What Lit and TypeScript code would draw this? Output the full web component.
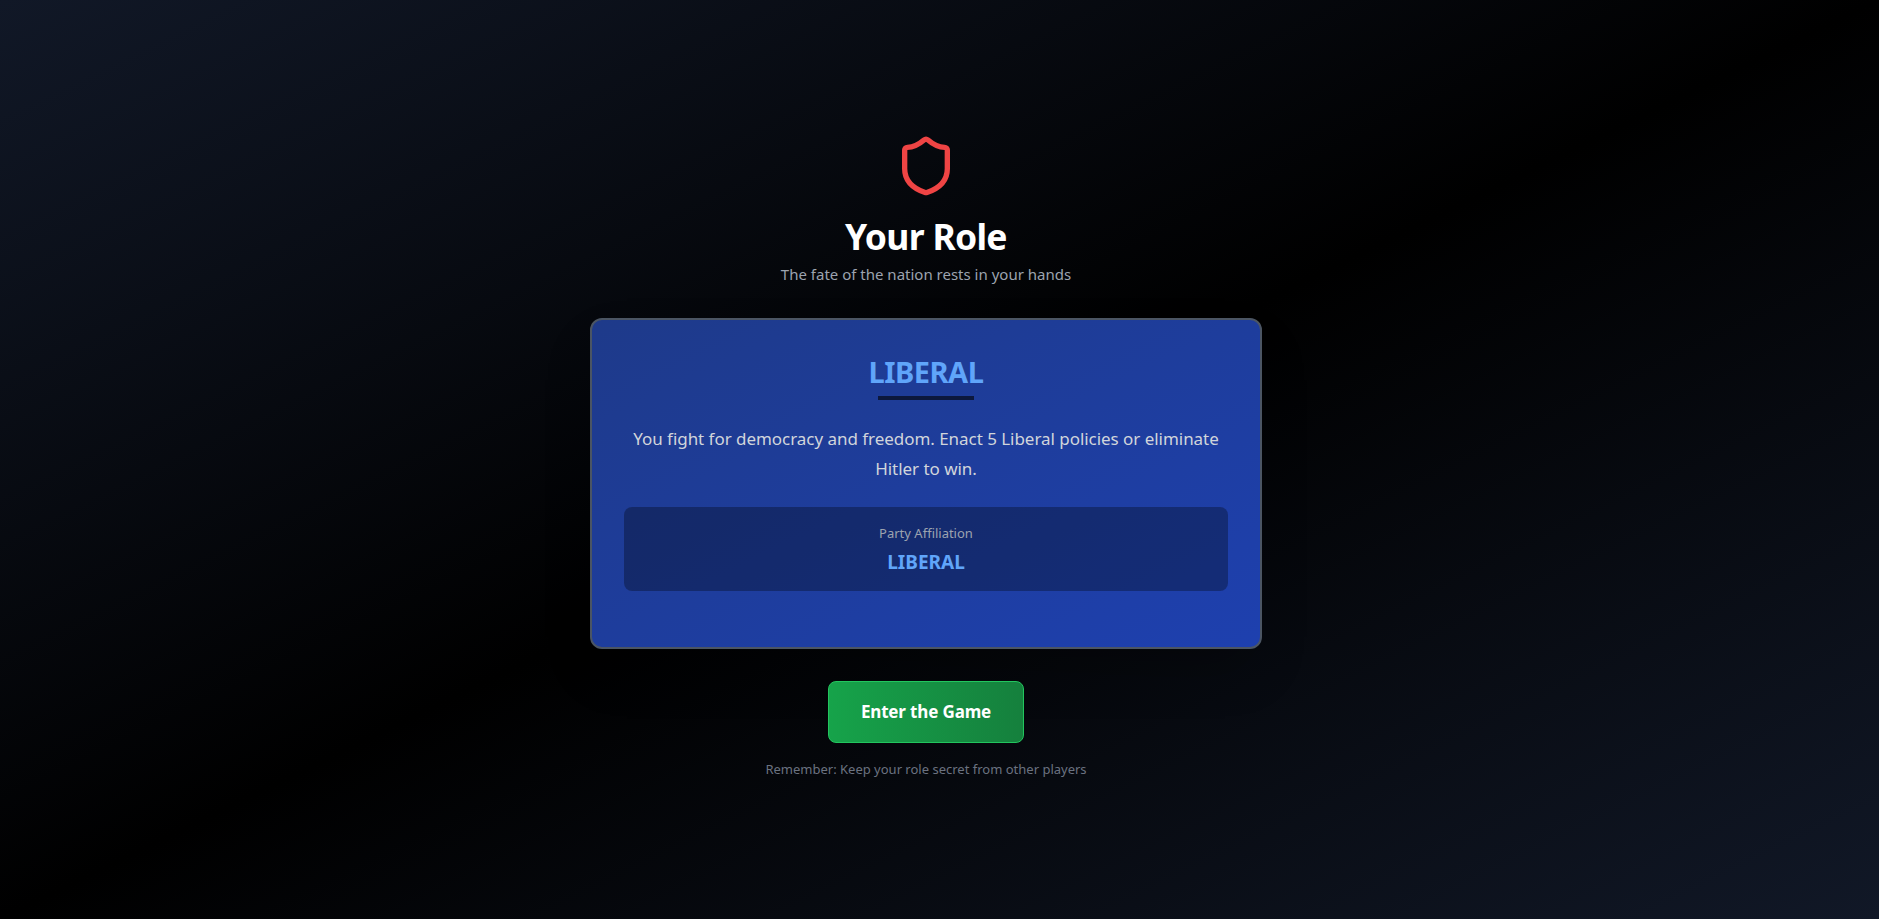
import { LitElement, html, css } from "lit";
import { customElement, property } from "lit/decorators.js";

@customElement("role-card")
export class RoleCard extends LitElement {
  static styles = css`
    :host {
      display: block;
      box-sizing: border-box;
      padding: 32px;
      border: 2px solid #4b5563;
      border-radius: 12px;
      background: linear-gradient(to bottom right, #1e3a8a, #1e40af);
      box-shadow: 0 25px 50px -12px rgba(0, 0, 0, 0.25);
      text-align: center;
    }

    .title {
      margin: 0 0 6px;
      padding-top: 2px;
      font-size: 29px;
      line-height: 36px;
      font-weight: 700;
      letter-spacing: -0.5px;
      color: #60a5fa;
    }

    .divider {
      width: 96px;
      height: 4px;
      margin: 0 auto 24px;
      background-color: rgba(0, 0, 0, 0.6);
    }

    .description {
      margin: 0 0 24px;
      font-size: 17px;
      line-height: 29.25px;
      letter-spacing: -0.04px;
      color: #d1d5db;
    }

    .party {
      padding: 16px;
      margin-bottom: 24px;
      border-radius: 8px;
      background-color: rgba(0, 0, 0, 0.3);
    }

    .party-label {
      margin: 0 0 4px;
      font-size: 13px;
      line-height: 20px;
      color: #9ca3af;
    }

    .party-name {
      margin: 0 0 -1px;
      padding-top: 1px;
      font-size: 19px;
      line-height: 28px;
      font-weight: 700;
      color: #60a5fa;
    }
  `;

  @property() role = "";
  @property() party = "";
  @property() description = "";

  render() {
    return html`
      <h2 class="title">${this.role}</h2>
      <div class="divider"></div>
      <p class="description">${this.description}</p>
      <div class="party">
        <p class="party-label">Party Affiliation</p>
        <p class="party-name">${this.party}</p>
      </div>
    `;
  }
}

@customElement("app-root")
export class AppRoot extends LitElement {
  static styles = css`
    :host {
      display: flex;
      align-items: center;
      justify-content: center;
      box-sizing: border-box;
      min-height: 100vh;
      padding: 0 27px 6px 0;
      font-family: "Noto Sans", "Open Sans", sans-serif;
      background: linear-gradient(to bottom right, #111827, #000000, #111827);
    }

    .content {
      display: flex;
      flex-direction: column;
      align-items: center;
      width: 672px;
    }

    .shield {
      width: 64px;
      height: 64px;
      margin-bottom: 16px;
      color: #ef4444;
    }

    .heading {
      margin: 0 0 6px;
      padding-top: 2px;
      font-size: 35.5px;
      line-height: 40px;
      font-weight: 700;
      letter-spacing: -0.7px;
      color: #ffffff;
    }

    .subtitle {
      margin: 0 0 32px;
      font-size: 15px;
      line-height: 24px;
      color: #9ca3af;
    }

    role-card {
      width: 100%;
      margin-bottom: 32px;
    }

    .enter-button {
      padding: 16px 32px;
      border: 1px solid #22c55e;
      border-radius: 8px;
      background: linear-gradient(to right, #16a34a, #15803d);
      font-family: inherit;
      font-size: 17px;
      line-height: 28px;
      font-weight: 700;
      letter-spacing: -0.15px;
      color: #ffffff;
      cursor: pointer;
    }

    .reminder {
      margin: 16px 0 0;
      font-size: 13px;
      line-height: 20px;
      color: #6b7280;
    }
  `;

  render() {
    return html`
      <main class="content">
        <svg
          class="shield"
          viewBox="0 0 24 24"
          fill="none"
          stroke="currentColor"
          stroke-width="2"
          stroke-linecap="round"
          stroke-linejoin="round"
        >
          <path
            d="M20 13c0 5-3.5 7.5-7.66 8.95a1 1 0 0 1-.67-.01C7.5 20.5 4 18 4 13V6a1 1 0 0 1 1-1c2 0 4.5-1.2 6.24-2.72a1.17 1.17 0 0 1 1.52 0C14.51 3.81 17 5 19 5a1 1 0 0 1 1 1z"
          />
        </svg>
        <h1 class="heading">Your Role</h1>
        <p class="subtitle">The fate of the nation rests in your hands</p>
        <role-card
          role="LIBERAL"
          party="LIBERAL"
          description="You fight for democracy and freedom. Enact 5 Liberal policies or eliminate Hitler to win."
        ></role-card>
        <button class="enter-button">Enter the Game</button>
        <p class="reminder">Remember: Keep your role secret from other players</p>
      </main>
    `;
  }
}
